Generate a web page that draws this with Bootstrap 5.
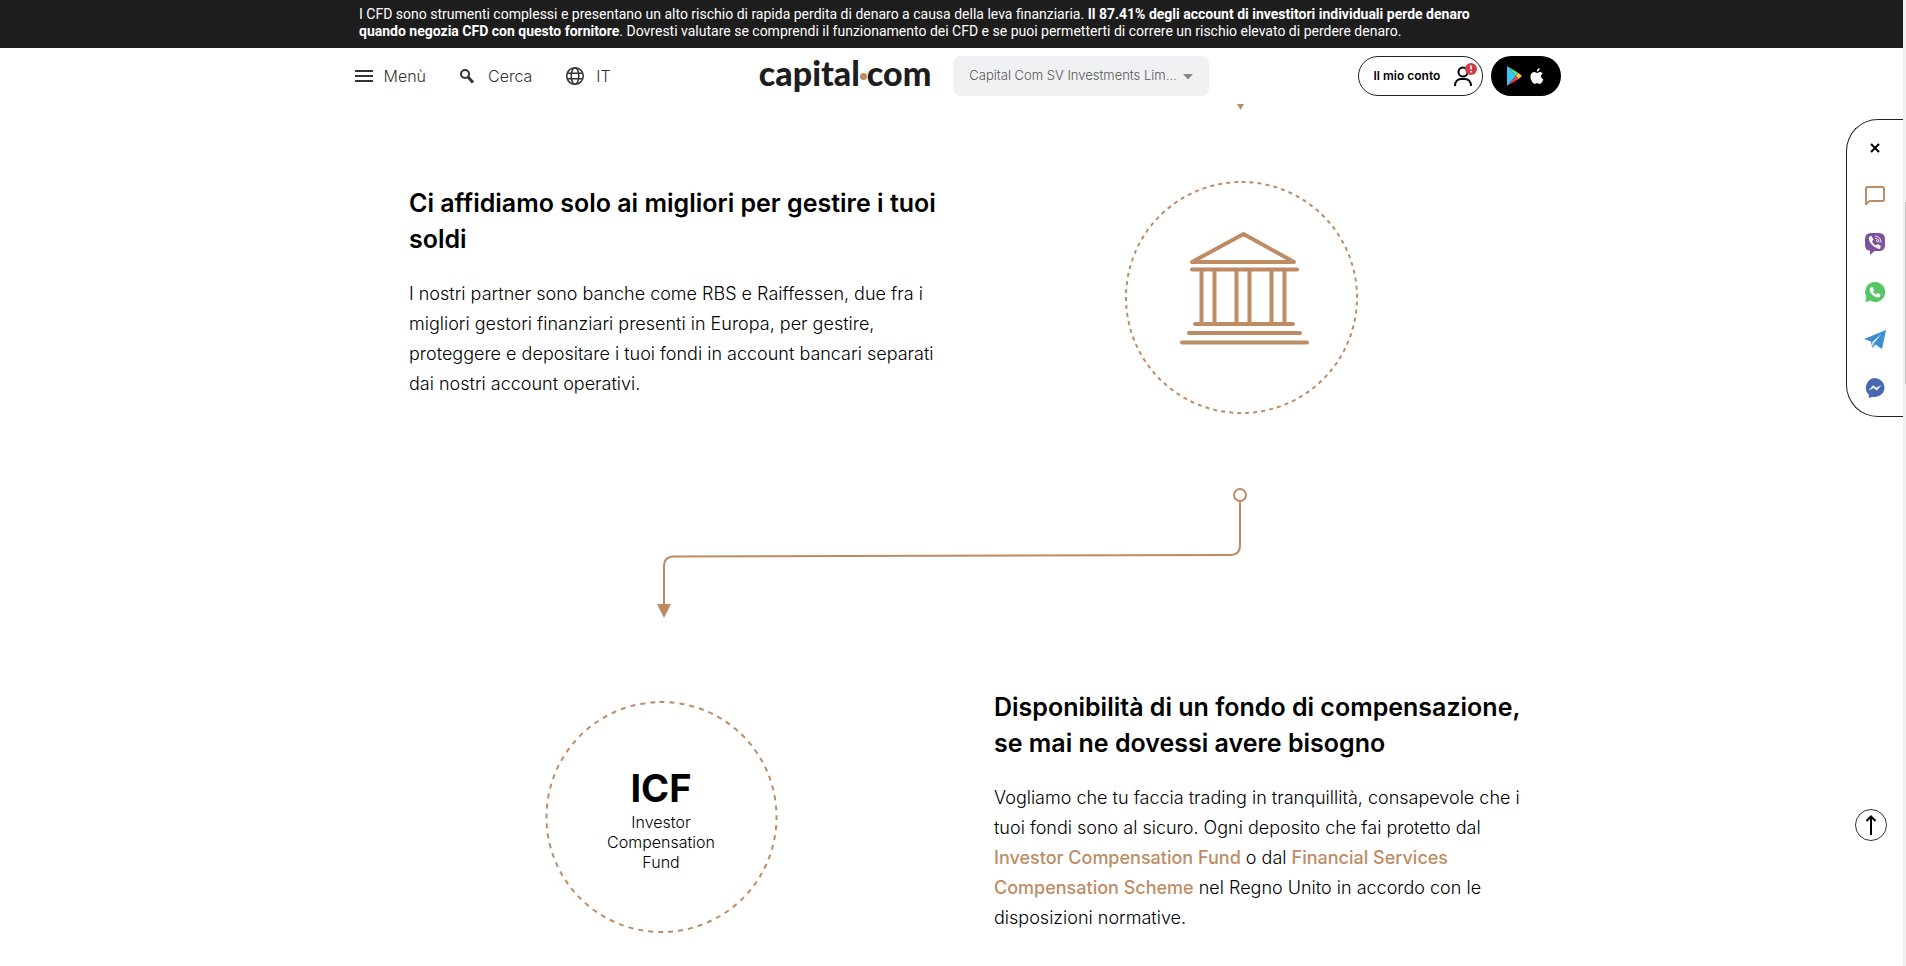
<!DOCTYPE html>
<html lang="it">
<head>
<meta charset="utf-8">
<meta name="viewport" content="width=device-width, initial-scale=1">
<title>Capital.com</title>
<link href="https://cdn.jsdelivr.net/npm/bootstrap@5.3.0/dist/css/bootstrap.min.css" rel="stylesheet">
<style>
:root { --sand: #bd8c65; --ink: #1d1d1d; }
body { font-family: Inter, "Liberation Sans", sans-serif; color: #000; background: #fff; overflow-x: hidden; }
.page-width { max-width: 1170px; margin: 0 auto; }
.gutter-end { padding-right: 18px; }
.risk-bar { background: var(--ink); color: #fff; font-family: Roboto, sans-serif; font-size: 14px; line-height: 17px; padding-top: 6px; padding-bottom: 8px; }
.risk-bar strong { font-weight: 700; }
.site-head { padding-left: 9px; height: 56px; }
.head-inner { max-width: 1206px; margin: 0 auto; }
.head-link { background: none; border: 0; padding: 0; color: #333; font-size: 16px; font-weight: 300; text-decoration: none; display: flex; align-items: center; }
.head-links { gap: 34px; }
.head-links svg { margin-right: 10px; }
.head-mid { gap: 22px; }
.brand { font-family: Lato, sans-serif; font-weight: 900; font-size: 34px; line-height: 32px; color: var(--ink); text-decoration: none; padding-bottom: 6px; }
.brand i { display: inline-block; width: 7px; height: 7px; border-radius: 50%; background: var(--sand); vertical-align: 6px; }
.entity { width: 256px; height: 40px; border: 0; border-radius: 8px; background: #f0f1f3; color: #555; font-size: 13px; font-weight: 300; padding: 0 32px 0 16px; appearance: none; text-overflow: ellipsis; white-space: nowrap; }
.entity-caret { right: 16px; top: 18px; pointer-events: none; }
.account { width: 125px; height: 40px; border: 1px solid #222; border-radius: 20px; background: #fff; font-size: 12px; font-weight: 600; padding: 0 5px 0 15px; }
.stores { width: 70px; height: 40px; border: 0; border-radius: 20px; background: #000; padding: 0; }
h2 { font-size: 25px; line-height: 36px; font-weight: 600; margin: 0 0 22px; }
.copy { font-size: 18px; line-height: 30px; font-weight: 300; margin: 0; }
.copy a { color: var(--sand); font-weight: 500; text-decoration: none; }
.story > div { width: 50%; }
.text-side { padding-left: 50px; }
.art-start { padding-left: 186px; }
.art-end { padding-left: 181px; }
.stem { padding-left: 878px; margin-bottom: 71px; }
.connector { padding-left: 298px; margin-top: 74px; margin-bottom: 70px; }
.seal-title { font-size: 38px; font-weight: 700; }
.seal-text { font-size: 16px; font-weight: 300; }
.rail { top: 119px; right: 3px; width: 57px; height: 298px; border: 1px solid #222; border-right: 0; border-radius: 32px 0 0 32px; background: #fff; padding: 4px 0; }
.rail > * { border: 0; background: none; padding: 0; height: 48px; display: flex; align-items: center; justify-content: center; }
.to-top { right: 19px; top: 809px; width: 32px; height: 32px; border: 1px solid #333; border-radius: 50%; background: #fff; padding: 0; }
.scroll-strip { top: 0; right: 0; width: 3px; height: 100vh; background: #f1f1f1; z-index: 1040; }
.scroll-strip span { display: block; margin: 202px 0 0 2px; height: 182px; background: #c1c1c1; }
svg { display: block; }
</style>
</head>
<body>
<header class="sticky-top bg-white">
  <div class="risk-bar gutter-end">
    <div class="page-width">
      I CFD sono strumenti complessi e presentano un alto rischio di rapida perdita di denaro a causa della leva finanziaria. <strong>Il 87.41% degli account di investitori individuali perde denaro<br>quando negozia CFD con questo fornitore</strong>. Dovresti valutare se comprendi il funzionamento dei CFD e se puoi permetterti di correre un rischio elevato di perdere denaro.
    </div>
  </div>
  <div class="site-head">
    <nav class="head-inner h-100 d-flex align-items-center justify-content-between" aria-label="Principale">
      <div class="head-links d-flex align-items-center">
        <button type="button" class="head-link"><svg width="19" height="14" viewBox="0 0 19 14"><path d="M0 2h18M0 7h18M0 12h18" stroke="#333" stroke-width="2"/></svg>Menù</button>
        <button type="button" class="head-link"><svg width="18" height="18" viewBox="0 0 18 18"><circle cx="5" cy="7" r="4" fill="none" stroke="#333" stroke-width="2"/><path d="m8 10 5 5.500" stroke="#333" stroke-width="3"/></svg>Cerca</button>
        <a href="#" class="head-link"><svg width="20" height="20" viewBox="0 0 20 20" fill="none" stroke="#333" stroke-width="1.500"><circle cx="9" cy="10" r="8.300"/><ellipse cx="9" cy="10" rx="3.800" ry="8.300"/><path d="M1 7.200h16M1 12.800h16"/></svg>IT</a>
      </div>
      <div class="head-mid d-flex align-items-center">
        <a href="#" class="brand">capital<i></i>com</a>
        <div class="position-relative">
          <select class="entity" aria-label="Società"><option>Capital Com SV Investments Limited</option></select>
          <svg class="entity-caret position-absolute" width="10" height="6" viewBox="0 0 10 6"><path d="M0 0h10L5 5.500z" fill="#888"/></svg>
        </div>
      </div>
      <div class="d-flex gap-2">
        <button type="button" class="account d-flex align-items-center justify-content-between">Il mio conto
          <svg width="24" height="26" viewBox="0 0 24 26"><circle cx="10" cy="9" r="4.500" fill="none" stroke="#000" stroke-width="2"/><path d="M2 23c0-5 3-7 6-7h4c3 0 6 2 6 7" fill="none" stroke="#000" stroke-width="2"/><circle cx="18" cy="6" r="6" fill="#ce3e4a"/><path d="M18 2.500v4M18 8v1.600" stroke="#fff" stroke-width="1.600"/></svg>
        </button>
        <button type="button" class="stores d-flex align-items-center justify-content-center gap-2" aria-label="Scarica l'app">
          <svg width="15" height="20" viewBox="0 0 15 20"><path d="M0 0v20l9-10z" fill="#32c8f5"/><path d="m0 0 9 10 2.500-3z" fill="#5bdd8b"/><path d="m0 20 9-10 2.500 3z" fill="#ee3b50"/><path d="m9 10 2.500-3L15 10l-3.500 3z" fill="#fdc829"/></svg>
          <svg width="14" height="17" viewBox="0 0 14 17" fill="#fff"><path d="M9.700 0c.2 1.700-1.100 3.600-2.900 3.700C6.600 2 8.100.3 9.700 0z"/><path d="M7 4.900c.8 0 1.700-.9 3-.9 1.200 0 2.200.6 2.800 1.500-2.600 1.500-2.100 4.900.5 5.900-.6 1.700-2 4.500-3.700 4.500-1 0-1.300-.6-2.500-.6s-1.600.6-2.500.6C2.500 16-.3 10.500.6 7.200 1.100 5.300 2.600 4 4.100 4c1.200 0 2.100.9 2.900.9z"/></svg>
        </button>
      </div>
    </nav>
  </div>
</header>

<main class="gutter-end">
  <div class="page-width">
    <div class="stem"><svg width="7" height="6" viewBox="0 0 7 6"><path d="M0 0h7L3.500 6z" fill="#bd8c65"/></svg></div>

    <section class="story d-flex align-items-start">
      <div class="text-side pt-1">
        <h2>Ci affidiamo solo ai migliori per gestire i tuoi<br>soldi</h2>
        <p class="copy">I nostri partner sono banche come RBS e Raiffessen, due fra i<br>migliori gestori finanziari presenti in Europa, per gestire,<br>proteggere e depositare i tuoi fondi in account bancari separati<br>dai nostri account operativi.</p>
      </div>
      <div class="art-end">
        <svg width="233" height="233" viewBox="0 0 233 233" fill="none" stroke="#bd8c65">
          <circle cx="116.500" cy="116.500" r="115.500" stroke-width="2" stroke-dasharray="4 4.063" transform="rotate(-90 116.500 116.500)"/>
          <g stroke-width="4" stroke-linecap="round" stroke-linejoin="round"><path d="M67 81h102L118.500 53zM67 88.500h105M70 143h98M64 152h111M57 161.500h125"/><path d="M76.500 90v52M89.500 90v52M111.500 90v52M124.500 90v52M146.500 90v52M159.500 90v52"/></g>
        </svg>
      </div>
    </section>

    <div class="connector">
      <svg width="590" height="131" viewBox="0 0 590 131"><g fill="none" stroke="#bd8c65" stroke-width="2"><circle cx="583" cy="7" r="6"/><path d="M583 13v44q0 10-10 10L17 68.500q-10 0-10 10V118"/></g><path d="M0 116h14L7 130z" fill="#bd8c65"/></svg>
    </div>

    <section class="story d-flex align-items-end">
      <div class="art-start">
        <svg width="233" height="233" viewBox="0 0 233 233">
          <circle cx="116.500" cy="117" r="115" fill="none" stroke="#bd8c65" stroke-width="2" stroke-dasharray="5 5.036" transform="rotate(-91 116.500 117)"/>
          <g text-anchor="middle"><text class="seal-title" x="116" y="102">ICF</text><g class="seal-text"><text x="116" y="128">Investor</text><text x="116" y="148">Compensation</text><text x="116" y="168">Fund</text></g></g>
        </svg>
      </div>
      <div class="text-side">
        <h2>Disponibilità di un fondo di compensazione,<br>se mai ne dovessi avere bisogno</h2>
        <p class="copy">Vogliamo che tu faccia trading in tranquillità, consapevole che i<br>tuoi fondi sono al sicuro. Ogni deposito che fai protetto dal<br><a href="#">Investor Compensation Fund</a> o dal <a href="#">Financial Services<br>Compensation Scheme</a> nel Regno Unito in accordo con le<br>disposizioni normative.</p>
      </div>
    </section>
  </div>
</main>

<aside class="rail position-fixed d-flex flex-column" aria-label="Contatti">
  <button type="button" aria-label="Chiudi"><svg width="10" height="10" viewBox="0 0 10 10"><path d="m1 1 8 8M9 1 1 9" stroke="#000" stroke-width="2"/></svg></button>
  <a href="#" aria-label="Chat"><svg width="20" height="20" viewBox="0 0 20 20"><path d="M1 18.200V2.500Q1 1 2.500 1h15Q19 1 19 2.500v11q0 1.500-1.500 1.500H4.600z" fill="none" stroke="#bd8c65" stroke-width="2" stroke-linejoin="round"/></svg></a>
  <a href="#" aria-label="Viber"><svg width="20" height="22" viewBox="0 0 20 22"><path d="M6 0h8q6 0 6 6v6q0 6-6 6h-4.500L5 22v-4.200Q0 17 0 12V6q0-6 6-6z" fill="#7d51a0"/><path d="M4.500 3.500 6.500 3l2 3.500L7 8.200q1 2.800 3.800 4.300l1.800-1.600 3.200 2.200-.6 2.200q-1 1-2.600.3Q6 12.500 4 7q-.6-2 .5-3.500z" fill="#fff"/><path d="M10 3q6 .5 6 6.500M10.500 5.300q3.500.3 3.800 4M11 7.500q1.400 0 1.600 1.600" fill="none" stroke="#fff" stroke-width=".9"/></svg></a>
  <a href="#" aria-label="WhatsApp"><svg width="20" height="20" viewBox="0 0 20 20"><path d="M10 0a10 10 0 1 1-4.600 18.800L.3 20l1-5.200A10 10 0 0 1 10 0z" fill="#57c765"/><path d="m6 5.300 1.700-.1 1.400 3L8 9.500q1 2 3.200 3l1.300-1.500 3 1.500q0 2.500-2.500 3Q6.500 14.500 4.700 8.500q-.2-2 1.300-3.200z" fill="#fff"/></svg></a>
  <a href="#" aria-label="Telegram"><svg width="22" height="20" viewBox="0 0 22 20"><path d="M22 0 18 19l-6.500-4.500L8.500 18 6.800 11.500 0 9z" fill="#3d8fd1"/><path d="m17.500 4-9.300 8.200.5 4.800 1-3.800z" fill="#fff"/></svg></a>
  <a href="#" aria-label="Messenger"><svg width="20" height="20" viewBox="0 0 20 20"><path d="M10 0a10 9.500 0 1 1-2.500 18.800L3.800 20v-3.200A9.800 9.800 0 0 1 10 0z" fill="#4768b0"/><path d="m3.500 12.500 4.300-4.800q.5-.5 1 0l2.500 2 5.200-2.700-4.300 5q-.5.500-1 0l-2.500-2z" fill="#fff"/></svg></a>
</aside>

<button type="button" class="to-top position-fixed d-flex align-items-center justify-content-center" aria-label="Torna su"><svg width="12" height="20" viewBox="0 0 12 20"><path d="M6 20V1.500M1.500 6 6 1.500 10.500 6" fill="none" stroke="#000" stroke-width="2"/></svg></button>
<div class="scroll-strip position-fixed d-flex flex-column" aria-hidden="true"><span></span></div>
<script src="https://cdn.jsdelivr.net/npm/bootstrap@5.3.0/dist/js/bootstrap.bundle.min.js"></script>
</body>
</html>
